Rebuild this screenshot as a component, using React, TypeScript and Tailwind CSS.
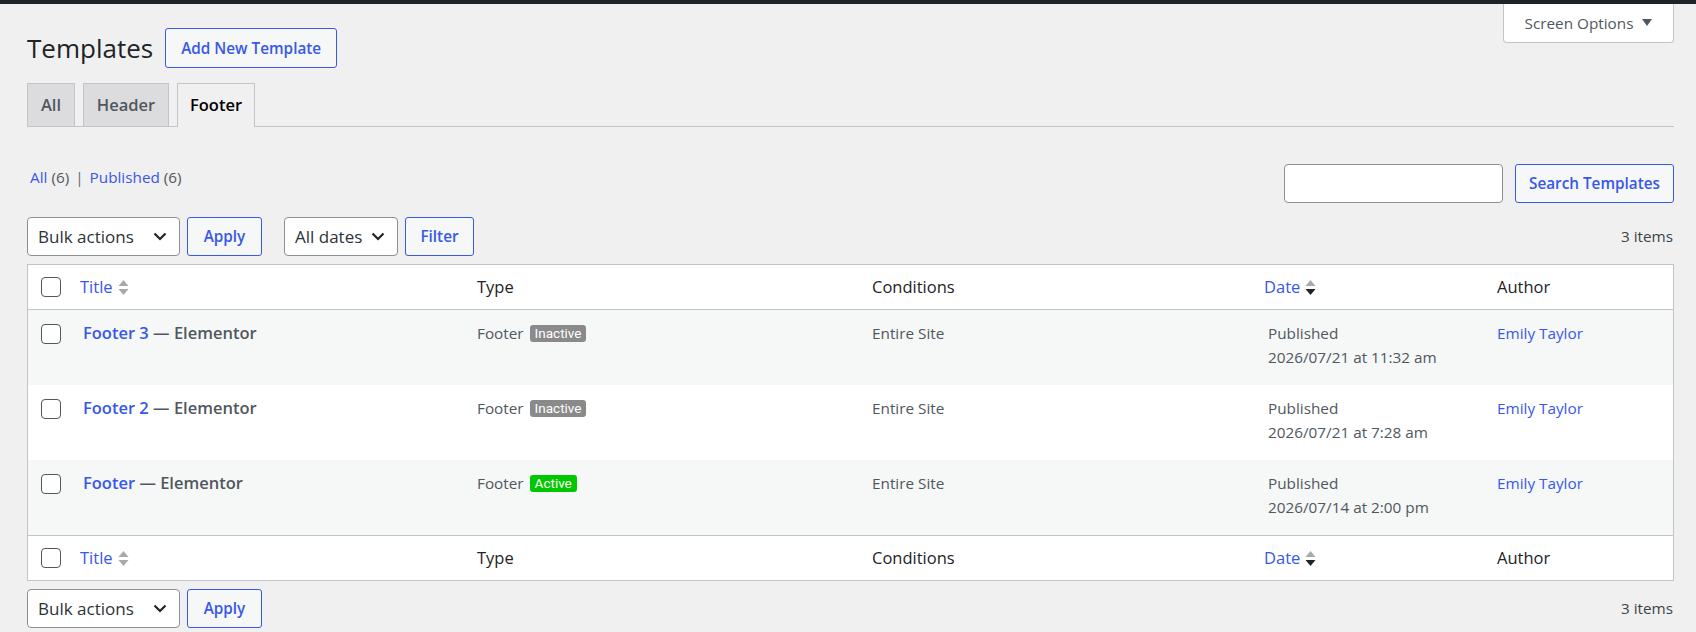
import React from "react";

const FONT = '"Open Sans", "Noto Sans", Arial, sans-serif';

function SortIcon({ active }: { active?: boolean }) {
  return (
    <svg width="11" height="17" viewBox="0 0 11 17" className="ml-[5px]">
      <polygon points="0.5,7 5.5,1 10.5,7" fill="#a7aaad" />
      <polygon points="0.5,10 10.5,10 5.5,16" fill={active ? "#1d2327" : "#a7aaad"} />
    </svg>
  );
}

function Chevron() {
  return (
    <svg width="14" height="9" viewBox="0 0 14 9">
      <path d="M1.5 1.5 L7 7 L12.5 1.5" fill="none" stroke="#1d2327" strokeWidth="2.2" />
    </svg>
  );
}

function Select({ label, w }: { label: string; w: string }) {
  return (
    <div
      className={`${w} h-[39px] bg-white border border-[#8c8f94] rounded-[4px] flex items-center justify-between pl-[10px] pr-[12px] text-[17px] text-[#2c3338]`}
    >
      <span>{label}</span>
      <Chevron />
    </div>
  );
}

function Btn({ label, w }: { label: string; w: string }) {
  return (
    <div
      className={`${w} h-[39px] border border-[#3858e9] rounded-[3px] bg-[#f6f7f7] flex items-center justify-center text-[15.3px] font-semibold text-[#3858e9]`}
    >
      {label}
    </div>
  );
}

function Checkbox() {
  return <div className="w-[20px] h-[20px] border border-[#50575e] rounded-[4px] bg-white" />;
}

function TableNav({ top }: { top?: boolean }) {
  return (
    <div className="flex items-center justify-between h-[39px]">
      <div className="flex items-center">
        <Select label="Bulk actions" w="w-[153px]" />
        <div className="ml-[7px]">
          <Btn label="Apply" w="w-[75px]" />
        </div>
        {top && (
          <>
            <div className="ml-[22px]">
              <Select label="All dates" w="w-[114px]" />
            </div>
            <div className="ml-[7px]">
              <Btn label="Filter" w="w-[69px]" />
            </div>
          </>
        )}
      </div>
      <div className="text-[15.3px] text-[#3c434a] pr-[1px]">3 items</div>
    </div>
  );
}

const COLS = "grid grid-cols-[40px_397px_395px_392px_233px_1fr]";

function HeaderRow({ bottom }: { bottom?: boolean }) {
  return (
    <div
      className={`${COLS} h-[45px] items-center text-[16.5px] text-[#1d2327] ${
        bottom ? "border-t border-[#c3c4c7]" : "border-b border-[#c3c4c7]"
      }`}
    >
      <div className="pl-[13px] flex items-center">
        <Checkbox />
      </div>
      <div className="pl-[12px] flex items-center text-[#3858e9]">
        <span>Title</span>
        <SortIcon />
      </div>
      <div className="pl-[12px]">Type</div>
      <div className="pl-[12px]">Conditions</div>
      <div className="pl-[12px] flex items-center text-[#3858e9]">
        <span>Date</span>
        <SortIcon active />
      </div>
      <div className="pl-[12px]">Author</div>
    </div>
  );
}

type Row = { name: string; active: boolean; date: string; striped: boolean };

const rows: Row[] = [
  { name: "Footer 3", active: false, date: "2026/07/21 at 11:32 am", striped: true },
  { name: "Footer 2", active: false, date: "2026/07/21 at 7:28 am", striped: false },
  { name: "Footer", active: true, date: "2026/07/14 at 2:00 pm", striped: true },
];

function DataRow({ r }: { r: Row }) {
  return (
    <div
      className={`${COLS} h-[75px] items-start pt-[11px] text-[15.3px] text-[#50575e] leading-[24px] ${
        r.striped ? "bg-[#f6f7f7]" : "bg-white"
      }`}
    >
      <div className="pl-[13px] pt-[3px]">
        <Checkbox />
      </div>
      <div className="pl-[15px] text-[16.5px] font-semibold">
        <span className="text-[#3858e9]">{r.name}</span>
        <span className="text-[#50575e]"> — Elementor</span>
      </div>
      <div className="pl-[12px] flex items-center">
        <span>Footer</span>
        <span
          className={`ml-[6px] h-[17px] px-[5px] rounded-[3px] text-white text-[13.5px] leading-[17px] ${
            r.active ? "bg-[#00c800]" : "bg-[#8a8a8a]"
          }`}
          style={{ fontFamily: 'Roboto, "Liberation Sans", sans-serif' }}
        >
          {r.active ? "Active" : "Inactive"}
        </span>
      </div>
      <div className="pl-[12px]">Entire Site</div>
      <div className="pl-[16px]">
        <div>Published</div>
        <div>{r.date}</div>
      </div>
      <div className="pl-[12px] text-[#3858e9]">Emily Taylor</div>
    </div>
  );
}

export default function App() {
  return (
    <div className="min-h-screen bg-[#f0f0f1]" style={{ fontFamily: FONT }}>
      <div className="h-[4px] bg-[#1d2327]" />
      <div className="pl-[27px] pr-[22px]">
        <div className="flex justify-between items-start">
          <div className="flex items-center mt-[24px]">
            <h1 className="text-[26px] text-[#1d2327] leading-[40px] font-normal">Templates</h1>
            <div className="ml-[12px] h-[40px] w-[172px] border border-[#3858e9] rounded-[3px] bg-[#f6f7f7] flex items-center justify-center text-[15.3px] font-semibold text-[#3858e9]">
              Add New Template
            </div>
          </div>
          <div className="w-[171px] h-[39px] bg-white border border-t-0 border-[#c3c4c7] rounded-b-[4px] flex items-center justify-center gap-[9px] text-[15.3px] text-[#50575e]">
            <span>Screen Options</span>
            <svg width="10" height="8" viewBox="0 0 10 8">
              <polygon points="0,0 10,0 5,7" fill="#50575e" />
            </svg>
          </div>
        </div>

        <div className="mt-[15px] flex items-end gap-[8px] border-b border-[#c3c4c7] h-[44px]">
          <div className="h-[43px] w-[48px] flex items-center justify-center border border-b-0 border-[#c3c4c7] bg-[#dcdcde] text-[16.5px] font-semibold text-[#50575e]">
            All
          </div>
          <div className="h-[43px] w-[86px] flex items-center justify-center border border-b-0 border-[#c3c4c7] bg-[#dcdcde] text-[16.5px] font-semibold text-[#50575e]">
            Header
          </div>
          <div className="h-[44px] w-[78px] -mb-[1px] flex items-center justify-center border border-b-0 border-[#c3c4c7] bg-[#f0f0f1] text-[16.5px] font-semibold text-black">
            Footer
          </div>
        </div>

        <div className="mt-[37px] flex justify-between items-start">
          <div className="leading-[26px] text-[15.3px] text-[#50575e] pl-[3px]">
            <span className="text-[#3858e9]">All</span> (6)
            <span className="mx-[6px] text-[#646970]">|</span>
            <span className="text-[#3858e9]">Published</span> (6)
          </div>
          <div className="flex items-center gap-[12px]">
            <div className="w-[219px] h-[39px] bg-white border border-[#8c8f94] rounded-[4px]" />
            <Btn label="Search Templates" w="w-[159px]" />
          </div>
        </div>

        <div className="mt-[14px]">
          <TableNav top />
        </div>

        <div className="mt-[8px] bg-white border border-[#c3c4c7]">
          <HeaderRow />
          {rows.map((r) => (
            <DataRow key={r.name} r={r} />
          ))}
          <HeaderRow bottom />
        </div>

        <div className="mt-[8px]">
          <TableNav />
        </div>
      </div>
    </div>
  );
}
